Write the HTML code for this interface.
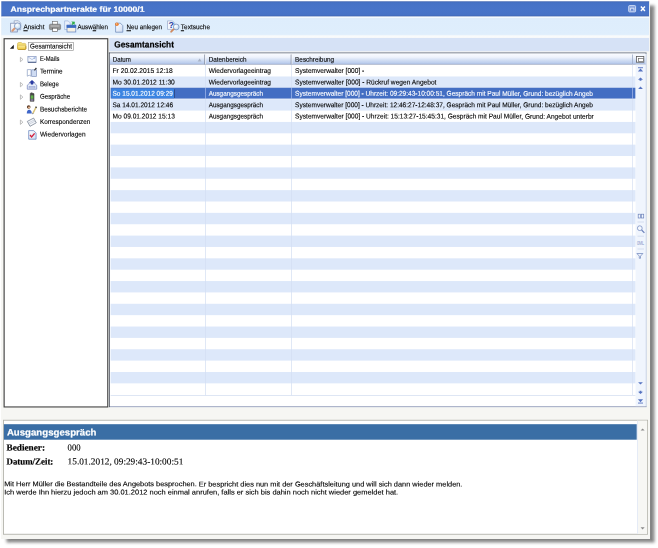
<!DOCTYPE html>
<html><head><meta charset="utf-8"><title>Ansprechpartnerakte</title>
<style>
html,body{margin:0;padding:0;background:#fff;}
body{width:658px;height:548px;position:relative;overflow:hidden;font-family:"Liberation Sans",sans-serif;}
.a{position:absolute;}
.t{position:absolute;left:0;top:0;white-space:pre;transform-origin:0 0;color:#000;text-rendering:geometricPrecision;-webkit-text-stroke:0.12px;}
u{text-decoration-thickness:0.55px;text-underline-offset:0.55px}
</style></head><body>
<!-- window + shadow -->
<div class="a" style="left:1.3px;top:1.3px;width:648.8px;height:537.5px;background:#f6f6f3;box-shadow:4.6px 4.3px 3px rgba(0,0,0,.48)"></div>
<svg class="a" style="left:0;top:0" width="658" height="548" viewBox="0 0 658 548" shape-rendering="geometricPrecision">
<defs>
<linearGradient id="gt" x1="0" y1="0" x2="0" y2="1"><stop offset="0" stop-color="#4065b2"/><stop offset=".1" stop-color="#4672c6"/><stop offset=".5" stop-color="#4874c9"/><stop offset=".89" stop-color="#4772c6"/><stop offset="1" stop-color="#3d60ab"/></linearGradient>
<linearGradient id="gtb" x1="0" y1="0" x2="0" y2="1"><stop offset="0" stop-color="#f4faff"/><stop offset=".047" stop-color="#f4faff"/><stop offset=".085" stop-color="#deedfc"/><stop offset=".835" stop-color="#dfeefc"/><stop offset=".873" stop-color="#eef5fc"/><stop offset=".91" stop-color="#f9fbfb"/><stop offset="1" stop-color="#f6f8fb"/></linearGradient>
<linearGradient id="gh" x1="0" y1="0" x2="0" y2="1"><stop offset="0" stop-color="#fafcff"/><stop offset=".35" stop-color="#eef3fc"/><stop offset=".62" stop-color="#d3dff4"/><stop offset="1" stop-color="#b3c7eb"/></linearGradient>
</defs>
<rect x="1.30" y="1.30" width="647.80" height="15.30" fill="url(#gt)"/>
<rect x="1.30" y="16.60" width="647.80" height="21.30" fill="url(#gtb)"/>
<rect x="3.55" y="38.15" width="104.75" height="369.35" fill="#424242"/>
<rect x="4.70" y="39.30" width="102.50" height="367.10" fill="#fff"/>
<rect x="28.4" y="42.3" width="45.2" height="8.1" fill="none" stroke="#8c8c8c" stroke-width="0.6"/>
<rect x="109.30" y="38.00" width="539.80" height="13.30" fill="#d6e2f6"/>
<rect x="108.90" y="52.60" width="537.60" height="354.50" fill="#b4c3e0"/>
<rect x="108.90" y="406.10" width="537.60" height="1.00" fill="#a3abc4"/>
<rect x="108.90" y="52.60" width="537.60" height="1.00" fill="#5d6068"/>
<rect x="108.90" y="52.60" width="1.00" height="354.50" fill="#5d6068"/>
<rect x="109.90" y="53.60" width="535.60" height="352.50" fill="#fff"/>
<rect x="109.90" y="53.60" width="535.60" height="10.40" fill="url(#gh)"/>
<rect x="109.90" y="63.90" width="535.60" height="0.70" fill="#8f9cb9"/>
<rect x="110.60" y="76.47" width="525.00" height="11.37" fill="#dde8fa"/>
<rect x="110.60" y="87.73" width="525.00" height="10.87" fill="#436ec3"/>
<rect x="110.60" y="99.20" width="525.00" height="11.37" fill="#dde8fa"/>
<rect x="110.60" y="121.93" width="525.00" height="11.37" fill="#dde8fa"/>
<rect x="110.60" y="144.66" width="525.00" height="11.37" fill="#dde8fa"/>
<rect x="110.60" y="167.39" width="525.00" height="11.37" fill="#dde8fa"/>
<rect x="110.60" y="190.13" width="525.00" height="11.37" fill="#dde8fa"/>
<rect x="110.60" y="212.86" width="525.00" height="11.37" fill="#dde8fa"/>
<rect x="110.60" y="235.59" width="525.00" height="11.37" fill="#dde8fa"/>
<rect x="110.60" y="258.32" width="525.00" height="11.37" fill="#dde8fa"/>
<rect x="110.60" y="281.05" width="525.00" height="11.37" fill="#dde8fa"/>
<rect x="110.60" y="303.79" width="525.00" height="11.37" fill="#dde8fa"/>
<rect x="110.60" y="326.52" width="525.00" height="11.37" fill="#dde8fa"/>
<rect x="110.60" y="349.25" width="525.00" height="11.37" fill="#dde8fa"/>
<rect x="110.60" y="371.98" width="525.00" height="11.37" fill="#dde8fa"/>
<rect x="111.50" y="88.70" width="62.50" height="9.50" fill="#3b84e2"/>
<rect x="174.00" y="89.30" width="0.50" height="8.60" fill="#1c2c55"/>
<rect x="205.20" y="64.60" width="0.70" height="330.70" fill="#d3def2"/>
<rect x="291.30" y="64.60" width="0.70" height="330.70" fill="#d3def2"/>
<rect x="632.30" y="64.60" width="0.70" height="330.40" fill="#d6e0f3"/>
<rect x="205.20" y="87.73" width="0.70" height="10.87" fill="#7c9ade"/>
<rect x="291.30" y="87.73" width="0.70" height="10.87" fill="#7c9ade"/>
<rect x="632.30" y="87.73" width="0.70" height="10.87" fill="#7c9ade"/>
<rect x="204.30" y="54.50" width="0.90" height="9.90" fill="#858c9e"/>
<rect x="205.20" y="54.50" width="0.80" height="9.50" fill="#ffffff" fill-opacity=".75"/>
<rect x="290.70" y="54.50" width="0.90" height="9.90" fill="#858c9e"/>
<rect x="291.60" y="54.50" width="0.80" height="9.50" fill="#ffffff" fill-opacity=".75"/>
<rect x="632.20" y="54.50" width="0.80" height="9.80" fill="#9fadc9"/>
<rect x="110.60" y="395.00" width="525.00" height="0.70" fill="#d0dbf0"/>
<rect x="635.60" y="64.60" width="9.90" height="341.50" fill="#f0f5fd"/>
<rect x="3.00" y="419.80" width="645.00" height="114.90" fill="#b4b4ac"/>
<rect x="3.90" y="420.70" width="643.20" height="113.10" fill="#fff"/>
<rect x="3.90" y="424.20" width="632.80" height="15.50" fill="#3a6ea5"/>
<rect x="637.00" y="420.70" width="10.10" height="113.10" fill="#f7f7f4"/>
<rect x="637.00" y="420.70" width="0.70" height="113.10" fill="#dde6f6"/>
</svg>
<svg class="a" style="left:0;top:0" width="658" height="548" viewBox="0 0 658 548">
<defs>
<linearGradient id="gpg" x1="0" y1="0" x2="1" y2="1"><stop offset="0" stop-color="#ffffff"/><stop offset="1" stop-color="#cfdcf2"/></linearGradient>
<linearGradient id="gfo" x1="0" y1="0" x2="0" y2="1"><stop offset="0" stop-color="#fdf0a2"/><stop offset="1" stop-color="#ecc63c"/></linearGradient>
<radialGradient id="glens" cx=".4" cy=".35" r=".7"><stop offset="0" stop-color="#ffffff"/><stop offset="1" stop-color="#b9d6f2"/></radialGradient>
</defs>
<!-- title buttons -->
<g fill="none" stroke="#fff">
<rect x="628.7" y="5.6" width="6.9" height="6.3" rx="0.8" fill="#87a3de" stroke-width="0.9" stroke="#d6e1f7"/>
<path d="M630.4 10.6v-2.4h3.5v2.4" stroke-width="0.9" stroke="#e6edfb" fill="#6c8cd2"/>
<path d="M640.9 6.6L644.9 10.9M644.9 6.6L640.9 10.9" stroke-width="1.5"/>
</g>
<!-- tb icon1: page + magnifier -->
<g stroke-width="0.7">
<path d="M14.2 20.8h4.2l2.3 2.3v6.6h-6.5z" fill="url(#gpg)" stroke="#8696b8"/>
<rect x="10.7" y="23.2" width="6.6" height="8.8" fill="url(#gpg)" stroke="#7385ad"/>
<circle cx="17.6" cy="26.1" r="3.2" fill="url(#glens)" stroke="#6f86b4"/>
<path d="M14.4 28.6l-2 2.1" stroke="#d99872" stroke-width="2" stroke-linecap="round"/>
</g>
<!-- printer -->
<g stroke-width="0.6">
<rect x="52.6" y="21.4" width="4.9" height="3.6" fill="#fff" stroke="#666"/>
<rect x="49.4" y="24.2" width="11.2" height="5.4" rx="1.2" fill="#929292" stroke="#6c6c6c"/>
<rect x="50.6" y="25.4" width="8.8" height="1.2" fill="#bdbdbd" stroke="none"/>
<rect x="52.6" y="28.2" width="4.9" height="3.2" fill="#fff" stroke="#555"/>
</g>
<!-- tb icon3: page + window + green arrow -->
<g stroke-width="0.7">
<path d="M64.6 20.9h3.6l2 2v6.6h-5.6z" fill="#e9f0fb" stroke="#9db4dd"/>
<rect x="67" y="25.2" width="8.8" height="6.8" fill="#f6f1e4" stroke="#5c7fc0"/>
<rect x="67" y="25.2" width="8.8" height="2.4" fill="#3a6ac2" stroke="#3a6ac2"/>
<path d="M71.3 21.6l3.6 .2l-.4 3.2l-1-1.1l-1.3 1l-.8-1l1.2-1z" fill="#2fae4a" stroke="none"/>
</g>
<!-- tb icon4: new page -->
<g stroke-width="0.7">
<path d="M115.6 23.2h4.8l2.4 2.4v6.6h-7.2z" fill="url(#gpg)" stroke="#6484b4"/>
<circle cx="116.9" cy="24.2" r="1.8" fill="#ec7c2c"/>
<circle cx="116.7" cy="23.9" r="0.7" fill="#ffd9a0"/>
</g>
<!-- tb icon5: ? + magnifier -->
<g stroke-width="0.7">
<path d="M167.5 20.9h5l2.2 2.2v6.3h-7.2z" fill="#f4f8fe" stroke="#9aa9c8"/>
<text x="168.6" y="28.4" font-family="Liberation Sans" font-weight="700" font-size="9" fill="#2b3fa2" stroke="none">?</text>
<circle cx="176.2" cy="27" r="2.9" fill="url(#glens)" stroke="#6f86b4"/>
<path d="M173.4 29.4l-2.2 2.3" stroke="#d08a60" stroke-width="1.9" stroke-linecap="round"/>
</g>
<!-- tree expander arrows -->
<path d="M13.8 44.8v4h-3.9z" fill="#1a1a1a"/>
<g fill="#fff" stroke="#a3a3a3" stroke-width="0.7">
<path d="M20.4 57.3l2.5 2.2l-2.5 2.2z"/>
<path d="M20.4 82.4l2.5 2.2l-2.5 2.2z"/>
<path d="M20.4 94.9l2.5 2.2l-2.5 2.2z"/>
<path d="M20.4 120l2.5 2.2l-2.5 2.2z"/>
</g>
<!-- folder -->
<g stroke-width="0.6">
<path d="M17.5 44q0-1.5 1.4-1.5h2.3l1 .9h2.5q1.1 0 1.1 1.1v3.9q0 1.1-1.1 1.1h-6.1q-1.1 0-1.1-1.1z" fill="#f7e27a" stroke="#cfae45"/>
<path d="M17.6 45.9q0-.7.8-.7h6.6q.8 0 .8.7v2.6q0 1-1 1h-6.2q-1 0-1-1z" fill="url(#gfo)" stroke="#c79f30" stroke-width="0.5"/>
<path d="M18.3 49.5h6.6q.9-.1.9-1v-2.4" fill="none" stroke="#b48d2a" stroke-width="0.7"/>
</g>
<!-- email -->
<g stroke-width="0.7">
<rect x="27.9" y="56.6" width="8.2" height="5.6" fill="#f3f7fe" stroke="#8395be"/>
<path d="M28 62.3h8.2" stroke="#42557f" stroke-width="0.9"/>
<path d="M28.2 57l3.8 2.6l3.8-2.6" fill="none" stroke="#9fb0d4"/>
<rect x="33.6" y="57.4" width="1.6" height="1.5" fill="#9fb6e3" stroke="none"/>
</g>
<!-- termine -->
<g stroke-width="0.7">
<path d="M27.3 69.6h3.7v6.6l-1.8-1l-1.9 1z" fill="#fff" stroke="#8a9cc0"/>
<rect x="31.7" y="69.8" width="4.7" height="6.6" fill="#cfdcf3" stroke="#7f93bd"/>
<path d="M36.4 68l-2 2.4" stroke="#333" stroke-width="1.2"/>
</g>
<!-- belege -->
<g stroke-width="0.7">
<path d="M27.3 85.2l2.2-2h5l2.2 2v4h-9.4z" fill="#e6ecf9" stroke="#7484bc"/>
<rect x="29" y="86.3" width="6" height="1.7" fill="#c7d0ea" stroke="#8e9ccc" stroke-width="0.5"/>
<path d="M32 80l3 2.8h-1.9v1.6h-2.2v-1.6h-1.9z" fill="#2b3ba2" stroke="none"/>
</g>
<!-- phone -->
<g stroke-width="0.5">
<path d="M30.2 93.4l1.2-.7l2.6 1v7.6h-3.8z" fill="#4a4a4a" stroke="#333"/>
<rect x="30.8" y="95.4" width="2.6" height="3.4" fill="#62b34c" stroke="none"/>
<rect x="30.8" y="99.3" width="2.6" height="1.5" fill="#8d86a8" stroke="none"/>
</g>
<!-- besuchsberichte -->
<g stroke="none">
<circle cx="28.7" cy="107" r="1.8" fill="#5b3a25"/>
<circle cx="29.1" cy="107.5" r="1.1" fill="#e6b58d"/>
<path d="M26.8 113.4q0-3.6 2.4-3.6t2.6 3.6z" fill="#3f66c9"/>
<path d="M36.2 107l-3.2 6.2" stroke="#d8c27a" stroke-width="1.5"/>
<path d="M36.4 106.6l-.6 1.2" stroke="#444" stroke-width="1.5"/>
<path d="M33 113.2l-.4 .9" stroke="#333" stroke-width="0.9"/>
</g>
<!-- korrespondenzen -->
<g stroke-width="0.7">
<path d="M27.3 121.4l6.3-3.3l2.7 4.7l-6.3 3.5z" fill="#f4f6fa" stroke="#6c7788"/>
<path d="M28.4 123l6-3.1M29.2 124.2l5.8-3" stroke="#a9b2c2" stroke-width="0.5" fill="none"/>
</g>
<!-- wiedervorlagen -->
<g stroke-width="0.7">
<path d="M28.7 130.6h5l2.4 2.4v6.2h-7.4z" fill="url(#gpg)" stroke="#5d7dba"/>
<path d="M30 135l1.6 1.9l3-3.6" fill="none" stroke="#d21f3c" stroke-width="1.3"/>
</g>
<!-- sort arrow -->
<path d="M197.6 61.6l2-3l2 3z" fill="#a9b3c6"/>
<!-- grid right strip icons -->
<g fill="#5673c0" stroke="none">
<rect x="636.6" y="56.4" width="7.2" height="5.8" fill="#fff" stroke="#5a5a5a" stroke-width="0.8"/>
<rect x="638.6" y="58.6" width="4.8" height="3" fill="#fff" stroke="#6a6a6a" stroke-width="0.7"/>
<rect x="638" y="67.3" width="5" height="0.9"/>
<path d="M640.5 68.4l2.6 3h-5.2z"/>
<path d="M640.5 77.4l2.5 2.3h-1.6v1h-1.8v-1h-1.6z"/>
<path d="M640.5 86.6l2.4 2.5h-4.8z"/>
<path d="M638.1 382.2h4.8l-2.4 2.4z"/>
<path d="M640.5 394l-2.5-2.3h1.6v-1h1.8v1h1.6z"/>
<path d="M637.9 399.2h5.2l-2.6 3z"/>
<rect x="638" y="402.6" width="5" height="0.9"/>
</g>
<g fill="none" stroke="#6c82ba" stroke-width="0.7">
<rect x="638.2" y="214.2" width="2.4" height="3.8"/>
<rect x="641.3" y="214.2" width="2.4" height="3.8"/>
<circle cx="639.8" cy="228.2" r="2.4" fill="#f4f8fe"/>
<path d="M641.6 230l2.8 2.8" stroke-width="1.2"/>
<path d="M636.9 253.5h6l-2.4 2.6v2.2h-1.2v-2.2z" fill="#eef3fc"/>
<path d="M637.5 222h6.5M637.5 236.2h6.5M637.5 249h6.5" stroke="#c2cfe8" stroke-width="0.6"/>
</g>
<text x="636.9" y="244.7" font-family="Liberation Sans" font-size="5" fill="#7f93c4" textLength="7.2" lengthAdjust="spacingAndGlyphs">0ML</text>
<!-- detail scrollbar arrows -->
<path d="M640.6 430.6l2-2.2l2 2.2z" fill="#8b8b8b"/>
<path d="M640.6 527.2l2 2.2l2-2.2z" fill="#8b8b8b"/>
</svg>

<div class="a" style="left:0;top:0;width:658px;height:548px;will-change:transform">
<span class="t" style="font-size:7.5px;line-height:8.377px;font-weight:700;-webkit-text-stroke:0.2px;color:#fff;transform:translate(10.60px,5.65px) scaleX(1.1472) rotate(.03deg)">Ansprechpartnerakte für 10000/1</span>
<span class="t" style="font-size:7.0px;line-height:7.819px;transform:translate(23.40px,24.29px) scaleX(0.9186) rotate(.03deg)"><u>A</u>nsicht</span>
<span class="t" style="font-size:7.0px;line-height:7.819px;transform:translate(77.40px,24.29px) scaleX(0.8905) rotate(.03deg)">Ausw<u>ä</u>hlen</span>
<span class="t" style="font-size:7.0px;line-height:7.819px;transform:translate(126.50px,24.29px) scaleX(0.8916) rotate(.03deg)"><u>N</u>eu anlegen</span>
<span class="t" style="font-size:7.0px;line-height:7.819px;transform:translate(180.80px,24.29px) scaleX(0.9261) rotate(.03deg)"><u>T</u>extsuche</span>
<span class="t" style="font-size:7.0px;line-height:7.819px;transform:translate(30.00px,43.49px) scaleX(0.8975) rotate(.03deg)">Gesamtansicht</span>
<span class="t" style="font-size:7.0px;line-height:7.819px;transform:translate(39.90px,56.04px) scaleX(0.8353) rotate(.03deg)">E-Mails</span>
<span class="t" style="font-size:7.0px;line-height:7.819px;transform:translate(39.90px,68.54px) scaleX(0.9154) rotate(.03deg)">Termine</span>
<span class="t" style="font-size:7.0px;line-height:7.819px;transform:translate(39.90px,81.30px) scaleX(0.8717) rotate(.03deg)">Belege</span>
<span class="t" style="font-size:7.0px;line-height:7.819px;transform:translate(39.90px,93.84px) scaleX(0.8847) rotate(.03deg)">Gespräche</span>
<span class="t" style="font-size:7.0px;line-height:7.819px;transform:translate(39.90px,106.39px) scaleX(0.9099) rotate(.03deg)">Besuchsberichte</span>
<span class="t" style="font-size:7.0px;line-height:7.819px;transform:translate(39.90px,118.94px) scaleX(0.9120) rotate(.03deg)">Korrespondenzen</span>
<span class="t" style="font-size:7.0px;line-height:7.819px;transform:translate(39.90px,131.49px) scaleX(0.9321) rotate(.03deg)">Wiedervorlagen</span>
<span class="t" style="font-size:9.0px;line-height:10.053px;font-weight:700;-webkit-text-stroke:0.2px;transform:translate(114.20px,39.48px) scaleX(0.9267) rotate(.03deg)">Gesamtansicht</span>
<span class="t" style="font-size:7.0px;line-height:7.819px;transform:translate(112.80px,56.80px) scaleX(0.8776) rotate(.03deg)">Datum</span>
<span class="t" style="font-size:7.0px;line-height:7.819px;transform:translate(208.70px,56.79px) scaleX(0.9078) rotate(.03deg)">Datenbereich</span>
<span class="t" style="font-size:7.0px;line-height:7.819px;transform:translate(295.10px,56.79px) scaleX(0.9086) rotate(.03deg)">Beschreibung</span>
<span class="t" style="font-size:7.0px;line-height:7.819px;transform:translate(112.50px,68.08px) scaleX(0.9546) rotate(.03deg)">Fr 20.02.2015 12:18</span>
<span class="t" style="font-size:7.0px;line-height:7.819px;transform:translate(208.70px,68.08px) scaleX(0.9362) rotate(.03deg)">Wiedervorlageeintrag</span>
<span class="t" style="font-size:7.0px;line-height:7.819px;transform:translate(295.10px,68.08px) scaleX(0.9411) rotate(.03deg)">Systemverwalter [000] -</span>
<span class="t" style="font-size:7.0px;line-height:7.819px;transform:translate(112.50px,79.45px) scaleX(0.9489) rotate(.03deg)">Mo 30.01.2012 11:30</span>
<span class="t" style="font-size:7.0px;line-height:7.819px;transform:translate(208.70px,79.45px) scaleX(0.9362) rotate(.03deg)">Wiedervorlageeintrag</span>
<span class="t" style="font-size:7.0px;line-height:7.819px;transform:translate(295.10px,79.43px) scaleX(0.9433) rotate(.03deg)">Systemverwalter [000] - Rückruf wegen Angebot</span>
<span class="t" style="font-size:7.0px;line-height:7.819px;color:#fff;transform:translate(112.50px,90.82px) scaleX(0.9290) rotate(.03deg)">So 15.01.2012 09:29</span>
<span class="t" style="font-size:7.0px;line-height:7.819px;color:#fff;transform:translate(208.70px,90.83px) scaleX(0.9059) rotate(.03deg)">Ausgangsgespräch</span>
<span class="t" style="font-size:7.0px;line-height:7.819px;color:#fff;transform:translate(295.10px,90.76px) scaleX(0.9337) rotate(.03deg)">Systemverwalter [000] - Uhrzeit: 09:29:43-10:00:51, Gespräch mit Paul Müller, Grund: bezüglich Angeb</span>
<span class="t" style="font-size:7.0px;line-height:7.819px;transform:translate(112.50px,102.19px) scaleX(0.9321) rotate(.03deg)">Sa 14.01.2012 12:46</span>
<span class="t" style="font-size:7.0px;line-height:7.819px;transform:translate(208.70px,102.20px) scaleX(0.9059) rotate(.03deg)">Ausgangsgespräch</span>
<span class="t" style="font-size:7.0px;line-height:7.819px;transform:translate(295.10px,102.13px) scaleX(0.9337) rotate(.03deg)">Systemverwalter [000] - Uhrzeit: 12:46:27-12:48:37, Gespräch mit Paul Müller, Grund: bezüglich Angeb</span>
<span class="t" style="font-size:7.0px;line-height:7.819px;transform:translate(112.50px,113.56px) scaleX(0.9415) rotate(.03deg)">Mo 09.01.2012 15:13</span>
<span class="t" style="font-size:7.0px;line-height:7.819px;transform:translate(208.70px,113.57px) scaleX(0.9059) rotate(.03deg)">Ausgangsgespräch</span>
<span class="t" style="font-size:7.0px;line-height:7.819px;transform:translate(295.10px,113.50px) scaleX(0.9408) rotate(.03deg)">Systemverwalter [000] - Uhrzeit: 15:13:27-15:45:31, Gespräch mit Paul Müller, Grund: Angebot unterbr</span>
<span class="t" style="font-size:9.4px;line-height:10.5px;font-weight:700;-webkit-text-stroke:0.2px;color:#fff;transform:translate(6.90px,427.48px) scaleX(1.0286) rotate(.03deg)">Ausgangsgespräch</span>
<span class="t" style="font-size:9.2px;line-height:10.184px;font-family:'Liberation Serif',serif;font-weight:700;-webkit-text-stroke:0.2px;transform:translate(6.50px,442.59px) scaleX(1.0057) rotate(.03deg)">Bediener:</span>
<span class="t" style="font-size:9.2px;line-height:10.184px;font-family:'Liberation Serif',serif;transform:translate(67.60px,442.60px) scaleX(0.9433) rotate(.03deg)">000</span>
<span class="t" style="font-size:9.2px;line-height:10.184px;font-family:'Liberation Serif',serif;font-weight:700;-webkit-text-stroke:0.2px;transform:translate(6.50px,456.39px) scaleX(0.9653) rotate(.03deg)">Datum/Zeit:</span>
<span class="t" style="font-size:9.2px;line-height:10.184px;font-family:'Liberation Serif',serif;transform:translate(67.60px,456.37px) scaleX(1.0119) rotate(.03deg)">15.01.2012, 09:29:43-10:00:51</span>
<span class="t" style="font-size:7.0px;line-height:7.819px;transform:translate(4.20px,481.28px) scaleX(1.0552) rotate(.03deg)">Mit Herr Müller die Bestandteile des Angebots besprochen. Er bespricht dies nun mit der Geschäftsleitung und will sich dann wieder melden.</span>
<span class="t" style="font-size:7.0px;line-height:7.819px;transform:translate(4.20px,489.40px) scaleX(1.0669) rotate(.03deg)">Ich werde Ihn hierzu jedoch am 30.01.2012 noch einmal anrufen, falls er sich bis dahin noch nicht wieder gemeldet hat.</span>
</div>
</body></html>
